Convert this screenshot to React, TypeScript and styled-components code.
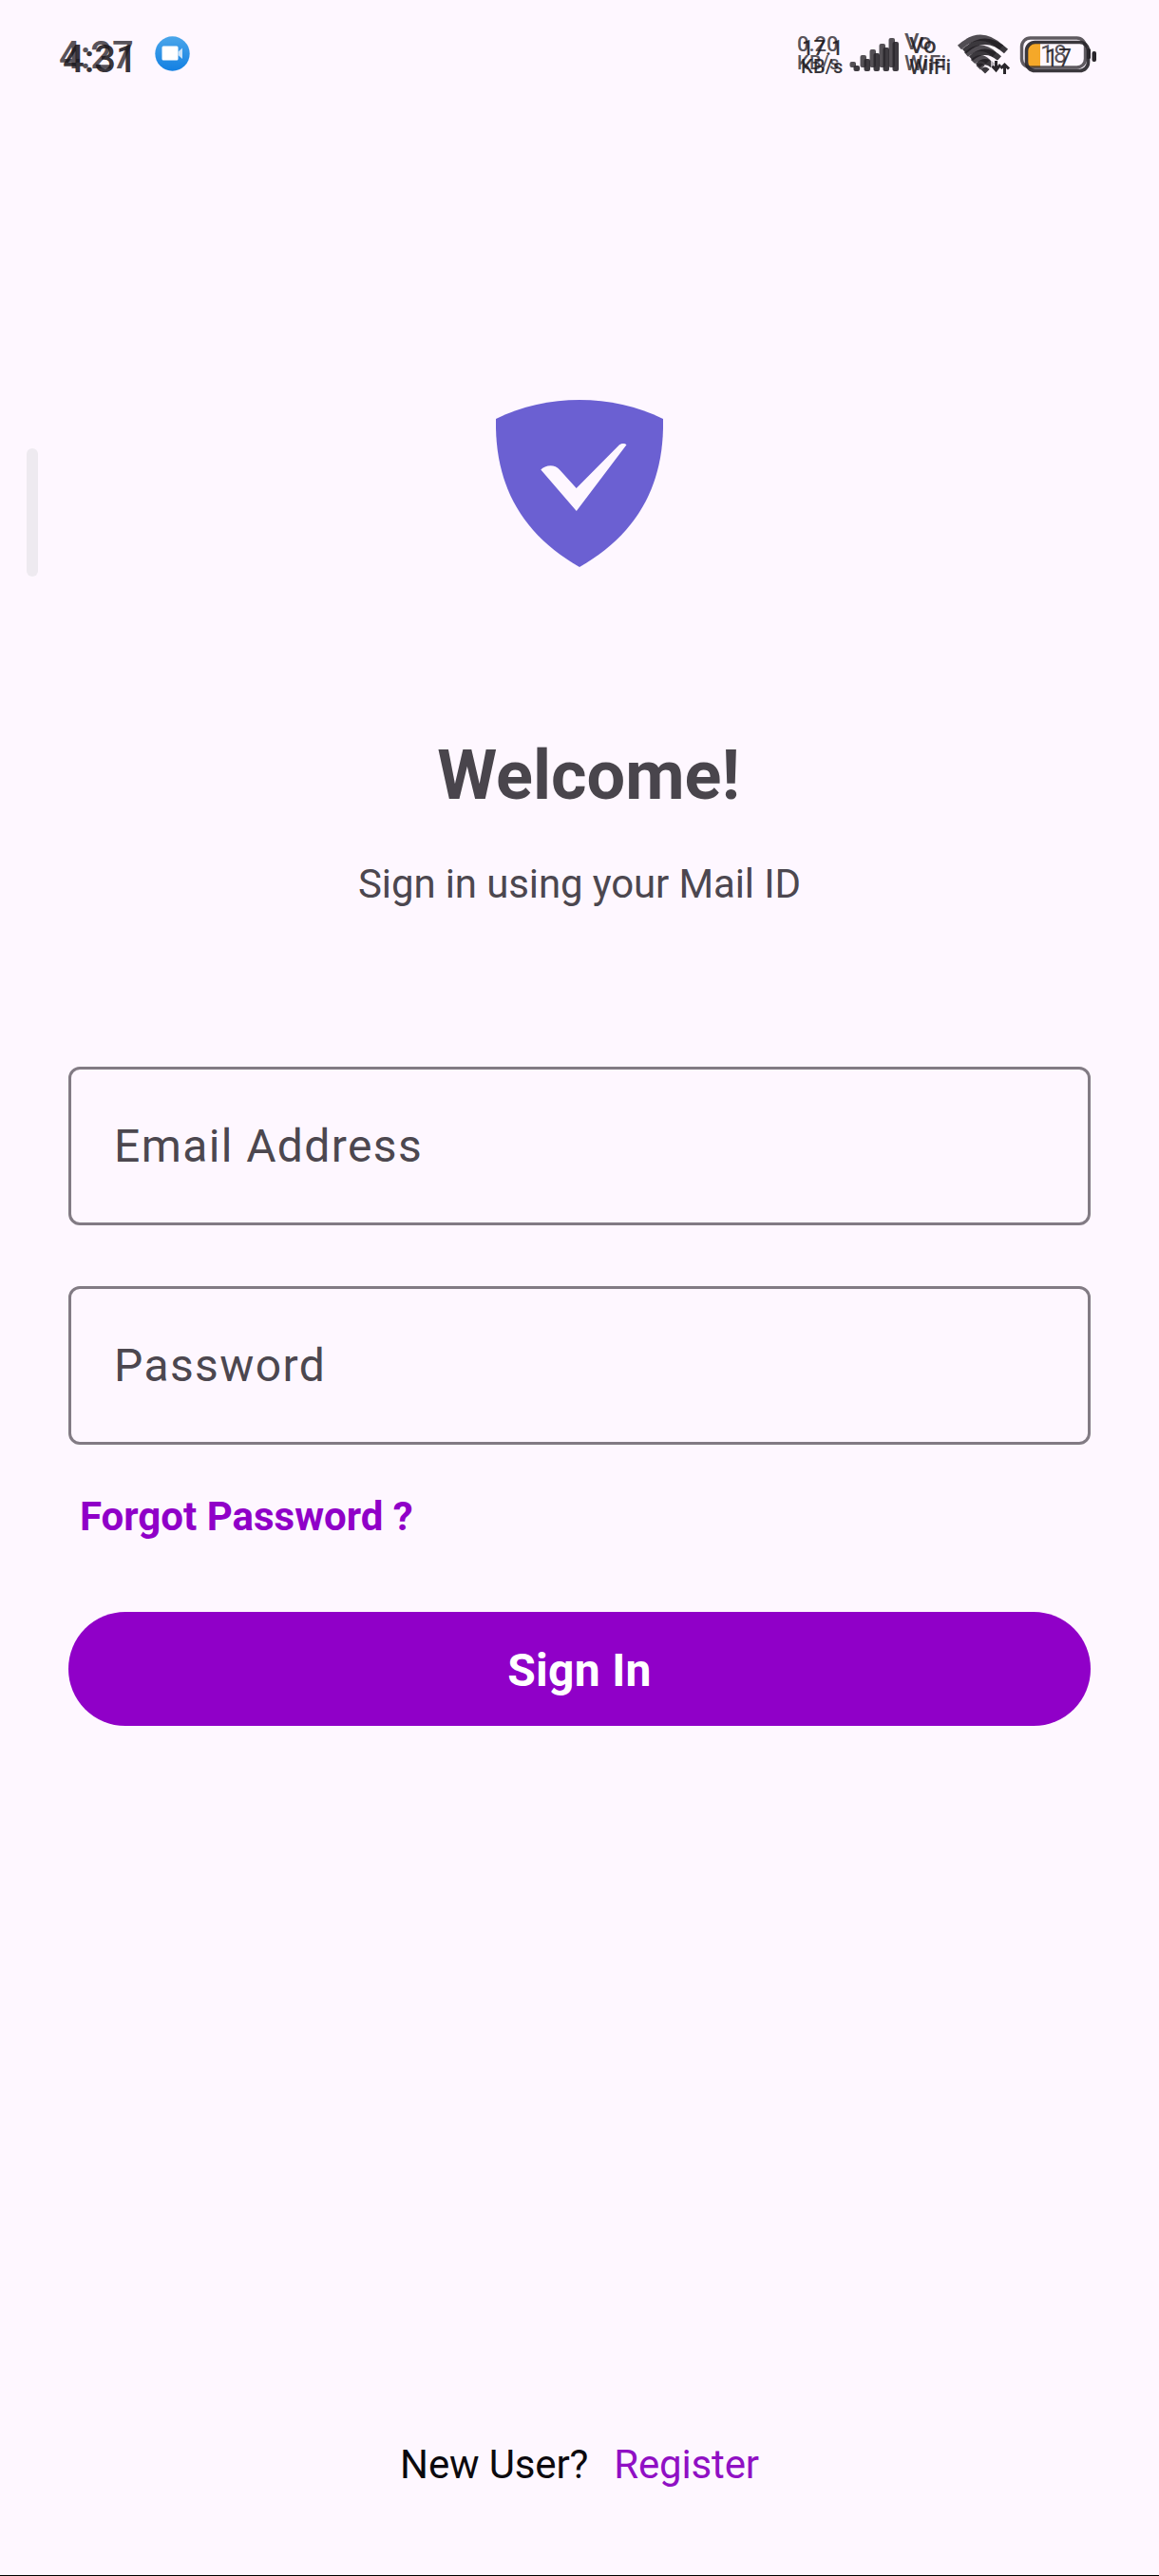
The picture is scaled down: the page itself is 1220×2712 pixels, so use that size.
import React from "react";
import styled, { createGlobalStyle } from "styled-components";

const GlobalStyle = createGlobalStyle`
  * { box-sizing: border-box; }
  html, body { margin: 0; padding: 0; background: #fef7ff; }
  body { font-family: Roboto, "Noto Sans", sans-serif; }
`;

const Screen = styled.div`
  position: relative;
  width: 1220px;
  height: 2712px;
  display: flex;
  flex-direction: column;
  background: #fef7ff;
  border-bottom: 1px solid #000;
  overflow: hidden;
`;

const StatusBar = styled.header`
  height: 116px;
  padding: 28px 63px 0 62px;
  display: flex;
  justify-content: space-between;
  align-items: flex-start;
`;

const StatusGroup = styled.div`
  display: flex;
  align-items: flex-start;
`;

const StatusSlot = styled.div<{ $width: number; $top?: number }>`
  position: relative;
  flex: none;
  width: ${(p) => p.$width}px;
  height: 60px;
  padding-top: ${(p) => p.$top ?? 0}px;
`;

const StatusText = styled.span<{
  $x: number;
  $y: number;
  $size: number;
  $faded?: boolean;
  $weight?: number;
  $spacing?: number;
}>`
  position: absolute;
  left: ${(p) => p.$x}px;
  top: ${(p) => p.$y}px;
  font-size: ${(p) => p.$size}px;
  line-height: 1;
  font-weight: ${(p) => p.$weight ?? 500};
  letter-spacing: ${(p) => p.$spacing ?? 0}px;
  white-space: nowrap;
  color: ${(p) => (p.$faded ? "rgba(42, 38, 44, 0.78)" : "rgba(28, 25, 30, 0.88)")};
`;

const Icon = styled.svg`
  display: block;
  flex: none;
`;

const EdgeHandle = styled.div`
  position: absolute;
  left: 28px;
  top: 472px;
  width: 12px;
  height: 135px;
  border-radius: 6px;
  background: #eeeaf0;
`;

const Main = styled.main`
  flex: 1;
  padding: 305px 72px 0;
  display: flex;
  flex-direction: column;
  align-items: center;
`;

const Title = styled.h1`
  margin: 178px 0 0 19px;
  font-size: 72px;
  line-height: 84px;
  font-weight: 700;
  color: #49454c;
`;

const Subtitle = styled.p`
  margin: 47px 0 0;
  font-size: 42px;
  line-height: 50px;
  letter-spacing: -0.12px;
  color: #4c474f;
`;

const Form = styled.form`
  width: 100%;
  margin-top: 167px;
  display: flex;
  flex-direction: column;
  align-items: stretch;
`;

const Field = styled.input`
  width: 100%;
  height: 167px;
  padding: 0 45px;
  border: 3px solid #827b84;
  border-radius: 12px;
  background: transparent;
  outline: none;
  font: 400 48px Roboto, sans-serif;
  letter-spacing: 1.4px;
  color: #4c474f;
  & + & { margin-top: 64px; }
  &::placeholder { color: #4c474f; opacity: 1; }
`;

const ForgotLink = styled.a`
  align-self: flex-start;
  margin: 51px 0 0 12px;
  font-size: 42px;
  line-height: 50px;
  font-weight: 700;
  color: #9000c8;
`;

const SignInButton = styled.button`
  margin-top: 75px;
  height: 120px;
  padding: 2px 0 0;
  border: 0;
  border-radius: 60px;
  background: #9000c8;
  color: #fff;
  font: 700 48px Roboto, sans-serif;
  letter-spacing: 0.3px;
`;

const Footer = styled.footer`
  display: flex;
  justify-content: center;
  gap: 27px;
  padding-bottom: 91px;
  font-size: 42px;
  line-height: 50px;
  letter-spacing: -0.15px;
  color: #0c0a0e;
`;

const RegisterLink = styled.a`
  color: #9010c4;
`;

const CameraBadge = () => (
  <Icon width="38" height="38" viewBox="0 0 38 38">
    <defs>
      <linearGradient id="badge" x1="0" y1="0" x2="0" y2="1">
        <stop offset="0" stopColor="#4aa6ea" />
        <stop offset="1" stopColor="#1380e2" />
      </linearGradient>
    </defs>
    <circle cx="18.500" cy="18.500" r="18.200" fill="url(#badge)" />
    <rect x="7.500" y="10.500" width="17" height="15" rx="1.500" fill="#fff" />
    <path d="M24.500 16.500 29 12.500V24L24.500 20Z" fill="#c9e2f8" />
  </Icon>
);

const bars = [
  { x: 0, y: 25, h: 6 },
  { x: 11, y: 18, h: 13 },
  { x: 21, y: 12, h: 19 },
  { x: 31, y: 6, h: 25 },
  { x: 41, y: 0, h: 31 },
];

const SignalBars = () => (
  <Icon width="56" height="42" viewBox="0 0 56 42">
    {bars.map((b) => (
      <g key={b.x} fill="#29262b">
        <rect x={b.x + 0.5} y={b.y} width="6.5" height={b.h} rx="2" opacity="0.8" />
        <rect x={b.x + 4.5} y={b.y + 4} width="6.5" height={b.h} rx="2" opacity="0.9" />
      </g>
    ))}
  </Icon>
);

const WifiArcs = ({ opacity }: { opacity: number }) => (
  <g fill="none" stroke="#211e23" strokeWidth="6" opacity={opacity}>
    <path d="M3 14Q25 -6.500 47 14" />
    <path d="M10 21.500Q25 8 40 21.500" />
    <path d="M17 29Q25 21 33 29" />
    <path d="M21.500 33Q25 29.500 28.500 33L25 36.500Z" fill="#211e23" strokeWidth="1.500" />
  </g>
);

const WifiIcon = () => (
  <Icon width="60" height="46" viewBox="0 0 60 46">
    <WifiArcs opacity={0.78} />
    <g transform="translate(5 4)">
      <WifiArcs opacity={0.88} />
    </g>
    <path d="M36 27H60V46H36Z" fill="#fef7ff" opacity="0.65" />
    <g fill="none" stroke="#29262b" strokeWidth="3">
      <path d="M41.500 28V38M37.500 33.500 41.500 38 46 32" />
      <path d="M50.500 42V32M46.500 36 50.500 32 55 36.500" />
    </g>
  </Icon>
);

const BatteryIcon = () => (
  <Icon width="84" height="42" viewBox="0 0 84 42">
    <rect x="9" y="8" width="13" height="25" rx="5" fill="#f5a829" />
    <rect x="15" y="8" width="7" height="25" fill="#f5a829" />
    <g fill="none" stroke="#29262b">
      <rect x="2.500" y="2" width="67" height="31" rx="9" strokeWidth="3.400" opacity="0.75" />
      <rect x="7.500" y="6.500" width="65" height="30" rx="9" strokeWidth="3.600" opacity="0.92" />
    </g>
    <rect x="71" y="13" width="4" height="11" rx="1.500" fill="#29262b" />
    <rect x="76.500" y="16" width="4.500" height="11" rx="2" fill="#29262b" />
  </Icon>
);

const ShieldLogo = () => (
  <Icon width="176" height="176" viewBox="0 0 176 176">
    <path
      d="M0 20C54 -6.600 122 -6.600 176 20C177.500 91 147.500 142 88 176C28.500 142 -1.500 91 0 20Z"
      fill="#6b60d2"
    />
    <path
      d="M47.300 73.500C51.500 69.300 61 66.500 67.500 74L84.700 93L129.500 47.800C131.500 45.800 135.500 45.400 137.500 47.300L84.800 117Z"
      fill="#fef7ff"
    />
  </Icon>
);

export default function App() {
  return (
    <>
      <GlobalStyle />
      <Screen>
        <StatusBar>
          <StatusGroup>
            <StatusSlot $width={101}>
              <StatusText $x={0} $y={10.5} $size={40} $faded>4:27</StatusText>
              <StatusText $x={4} $y={14.5} $size={40}>4:31</StatusText>
            </StatusSlot>
            <StatusSlot $width={38} $top={10}>
              <CameraBadge />
            </StatusSlot>
          </StatusGroup>
          <StatusGroup>
            <StatusSlot $width={55}>
              <StatusText $x={0} $y={8} $size={22} $faded>0.20</StatusText>
              <StatusText $x={0} $y={28} $size={20} $faded $spacing={0.3}>KB/s</StatusText>
              <StatusText $x={5} $y={12} $size={22}>17.1</StatusText>
              <StatusText $x={4} $y={32} $size={20} $spacing={0.3}>KB/s</StatusText>
            </StatusSlot>
            <StatusSlot $width={58} $top={12}>
              <SignalBars />
            </StatusSlot>
            <StatusSlot $width={55}>
              <StatusText $x={0} $y={4} $size={24} $faded>Vo</StatusText>
              <StatusText $x={0} $y={28} $size={22} $faded $spacing={0.5}>WiFi</StatusText>
              <StatusText $x={5} $y={8} $size={24}>Vo</StatusText>
              <StatusText $x={5} $y={32} $size={22} $spacing={0.5}>WiFi</StatusText>
            </StatusSlot>
            <StatusSlot $width={66} $top={8}>
              <WifiIcon />
            </StatusSlot>
            <StatusSlot $width={84} $top={10}>
              <BatteryIcon />
              <StatusText $x={22} $y={17} $size={25} $faded $weight={400}>18</StatusText>
              <StatusText $x={27} $y={21} $size={25} $weight={400}>17</StatusText>
            </StatusSlot>
          </StatusGroup>
        </StatusBar>
        <EdgeHandle />
        <Main>
          <ShieldLogo />
          <Title>Welcome!</Title>
          <Subtitle>Sign in using your Mail ID</Subtitle>
          <Form onSubmit={(e: React.FormEvent) => e.preventDefault()}>
            <Field type="email" placeholder="Email Address" />
            <Field type="password" placeholder="Password" />
            <ForgotLink>Forgot Password ?</ForgotLink>
            <SignInButton type="submit">Sign In</SignInButton>
          </Form>
        </Main>
        <Footer>
          <span>New User?</span>
          <RegisterLink>Register</RegisterLink>
        </Footer>
      </Screen>
    </>
  );
}
